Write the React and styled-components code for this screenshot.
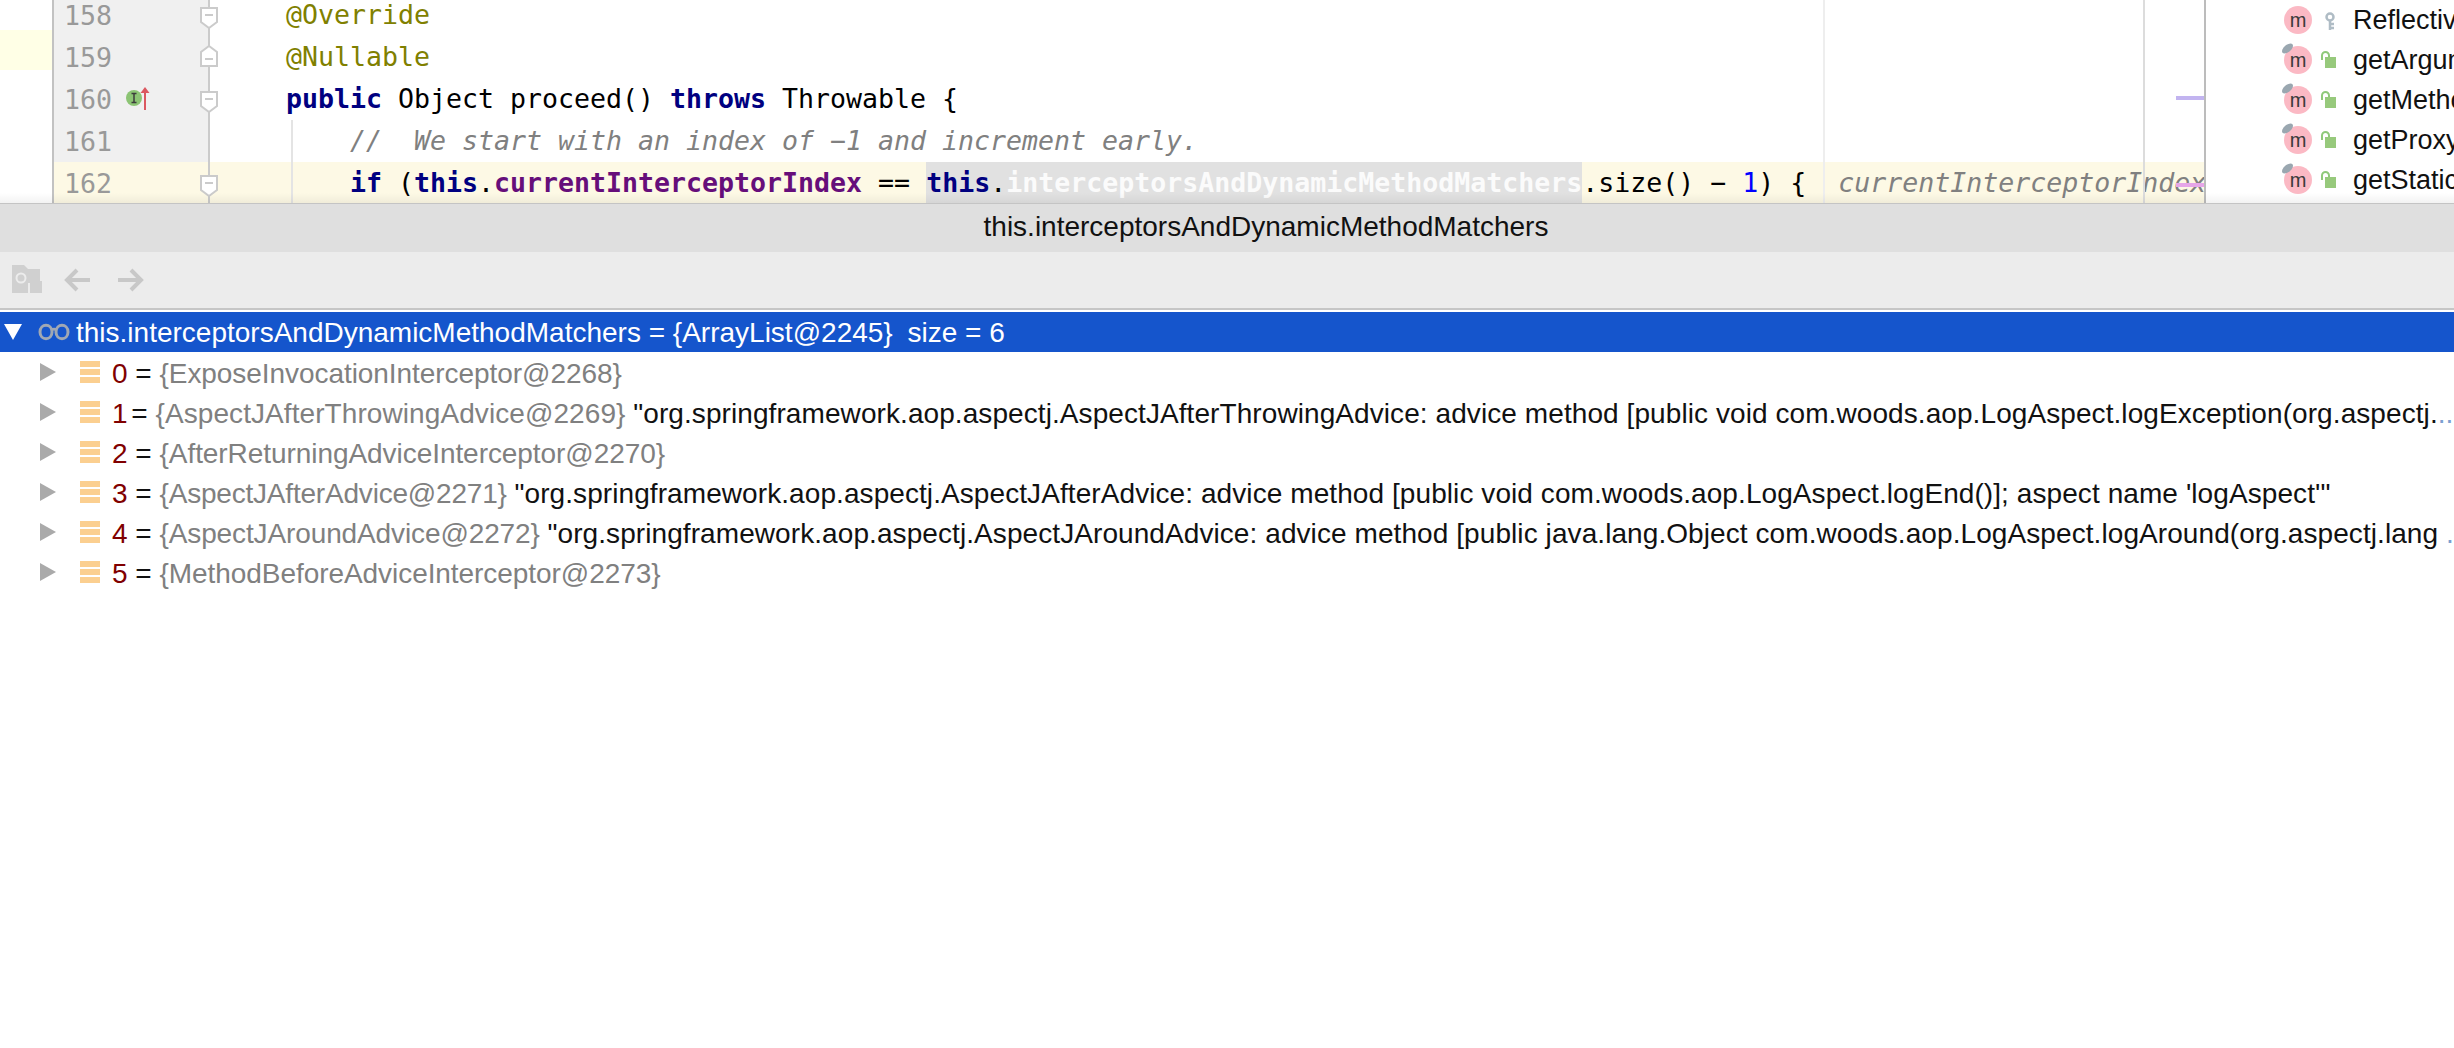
import React from 'react';
import styled, { createGlobalStyle } from 'styled-components';

const GlobalStyle = createGlobalStyle`
  html, body {
    margin: 0;
    padding: 0;
    background: #fff;
    overflow: hidden;
  }
  #root {
    width: 2454px;
    height: 1048px;
    overflow: hidden;
  }
`;

const Page = styled.div`
  width: 2454px;
  height: 1048px;
  display: flex;
  flex-direction: column;
  background: #fff;
  font-family: "Liberation Sans", Arial, sans-serif;
  overflow: hidden;
`;

const Top = styled.div`
  position: relative;
  display: flex;
  height: 203px;
  overflow: hidden;
  border-bottom: 1px solid #c4c4c4;
  flex: none;
`;

const Margin = styled.div`
  width: 52px;
  flex: none;
  padding-top: 30px;
`;

const MarginMark = styled.div`
  height: 40px;
  background: #ffffe6;
`;

const Editor = styled.div`
  position: relative;
  width: 2150px;
  flex: none;
  border-left: 2px solid #c2c2c2;
  border-right: 2px solid #bcbcbc;
  overflow: hidden;
`;

const Lines = styled.div`
  margin-top: -6px;
`;

const Line = styled.div`
  display: flex;
  height: 42px;
  background: ${p => (p.$current ? '#fdf9e5' : 'transparent')};
`;

const Gutter = styled.div`
  position: relative;
  width: 156px;
  flex: none;
  display: flex;
  align-items: center;
  gap: 14px;
  padding-left: 10px;
  box-sizing: border-box;
  border-right: 2px solid #cbcbcb;
  background: ${p => (p.$current ? 'transparent' : '#f0f0f0')};
`;

const LineNo = styled.span`
  font-family: "DejaVu Sans Mono", monospace;
  font-size: 26.58px;
  color: #999;
`;

const Fold = styled.svg`
  position: absolute;
  right: -10px;
  top: ${p => (p.$up ? '9px' : '13px')};
  width: 18px;
  height: 22px;
`;

const Code = styled.div`
  flex: 1;
  padding-left: ${p => 76 + p.$indent * 64}px;
  font-family: "DejaVu Sans Mono", monospace;
  font-size: 26.58px;
  line-height: 42px;
  white-space: pre;
  color: #000;
`;

const Kw = styled.span`
  color: #000080;
  font-weight: 700;
`;

const Ann = styled.span`
  color: #808000;
`;

const Comment = styled.span`
  color: #808080;
  font-style: italic;
`;

const Field = styled.span`
  color: #660e7a;
  font-weight: 700;
`;

const Num = styled.span`
  color: #0000ff;
`;

const Found = styled.span`
  display: inline-block;
  height: 42px;
  background: #e1e1e1;
`;

const Selected = styled.span`
  color: #fbfbfb;
  font-weight: 700;
`;

const Hint = styled.span`
  margin-left: 32px;
  color: #808080;
  font-style: italic;
`;

const Guide = styled.div`
  position: absolute;
  left: ${p => p.$x}px;
  top: ${p => p.$top}px;
  bottom: 0;
  width: 2px;
  background: ${p => p.$color};
`;

const ScrollMark = styled.div`
  position: absolute;
  right: 0;
  top: ${p => p.$top}px;
  width: 28px;
  height: 4px;
  background: ${p => p.$color};
`;

const Shade = styled.div`
  position: absolute;
  left: 0;
  right: 0;
  bottom: 0;
  height: 10px;
  background: linear-gradient(to bottom, rgba(0, 0, 0, 0), rgba(0, 0, 0, 0.05));
  pointer-events: none;
`;

const Structure = styled.div`
  flex: 1;
  padding-left: 78px;
  overflow: hidden;
`;

const Member = styled.div`
  display: flex;
  align-items: center;
  height: 40px;
  white-space: nowrap;
  font-size: 27px;
  color: #111;
`;

const MemberIcon = styled.div`
  position: relative;
  width: 28px;
  height: 28px;
  flex: none;
  border-radius: 50%;
  background: #fbb9c4;
  display: flex;
  align-items: center;
  justify-content: center;
  font-size: 20px;
  line-height: 24px;
  color: #3a3a3a;
`;

const Override = styled.div`
  position: absolute;
  left: 0;
  top: -4px;
  width: 7px;
  height: 13px;
  border-radius: 50%;
  background: #9aa7b0;
  transform: rotate(50deg);
`;

const Access = styled.svg`
  width: 18px;
  height: 24px;
  flex: none;
  margin: 0 15px 0 8px;
`;

const TitleBar = styled.div`
  height: 48px;
  flex: none;
  background: #dfdfdf;
  display: flex;
  justify-content: center;
  padding-left: 78px;
  font-size: 28px;
  line-height: 46px;
  color: #111;
`;

const Toolbar = styled.div`
  height: 56px;
  flex: none;
  background: #ececec;
  border-bottom: 2px solid #c6c6c6;
  display: flex;
  align-items: center;
  padding-left: 12px;
`;

const ToolIcon = styled.svg`
  width: ${p => p.$w}px;
  height: 30px;
  margin-right: ${p => p.$gap}px;
  flex: none;
`;

const Tree = styled.div`
  padding-top: 2px;
`;

const Row = styled.div`
  display: flex;
  align-items: center;
  height: 40px;
  white-space: nowrap;
  font-size: 28px;
  color: ${p => (p.$selected ? '#fff' : '#111')};
  background: ${p => (p.$selected ? '#1555cc' : 'transparent')};
  padding-left: ${p => (p.$selected ? '4px' : '40px')};
  overflow: hidden;
`;

const RowText = styled.div`
  padding-top: ${p => (p.$selected ? '1px' : '3px')};
`;

const Arrow = styled.div`
  width: 0;
  height: 0;
  flex: none;
  border-left: 16px solid #aaa;
  border-top: 9px solid transparent;
  border-bottom: 9px solid transparent;
`;

const OpenArrow = styled.div`
  width: 0;
  height: 0;
  flex: none;
  border-top: 16px solid #fff;
  border-left: 9px solid transparent;
  border-right: 9px solid transparent;
`;

const Glasses = styled.svg`
  width: 32px;
  height: 18px;
  flex: none;
  margin: 0 6px 0 16px;
`;

const Stack = styled.div`
  width: 20px;
  height: 22px;
  flex: none;
  margin: 0 12px 0 24px;
  background: repeating-linear-gradient(to bottom, #fbcf90 0 6px, transparent 6px 8px);
`;

const Index = styled.span`
  color: #800000;
  margin-right: ${p => (p.$narrow ? '-4px' : '0')};
`;

const Grey = styled.span`
  color: #808080;
  letter-spacing: ${p => p.$spacing}px;
`;

const Value = styled.span`
  letter-spacing: 0.08px;
`;

const More = styled.span`
  color: #7c9fd0;
`;

const Size = styled.span`
  margin-left: 7px;
`;

const FoldIcon = ({ up }) => (
  <Fold $up={up} viewBox="0 0 18 22">
    <path
      d={up ? 'M1 21V7L9 1l8 6v14z' : 'M1 1v14l8 6 8-6V1z'}
      fill="#fff"
      stroke="#cbcbcb"
      strokeWidth="2"
    />
    <path d={up ? 'M5 14h8' : 'M5 8h8'} stroke="#cbcbcb" strokeWidth="2" />
  </Fold>
);

const LockIcon = () => (
  <Access viewBox="0 0 18 24">
    <path d="M2 12V7.500a3.500 3.500 0 0 1 7 0V9" fill="none" stroke="#8fc97a" strokeWidth="2" />
    <rect x="5" y="9" width="11" height="11" fill="#97c97c" />
  </Access>
);

const KeyIcon = () => (
  <Access viewBox="0 0 18 24">
    <circle cx="10" cy="9" r="3.500" fill="none" stroke="#afbcc5" strokeWidth="2.500" />
    <path d="M10 12v10M10 16h4M10 20h4" stroke="#afbcc5" strokeWidth="2.500" />
  </Access>
);

const members = [
  { name: 'ReflectiveMethodInvocation', key: true },
  { name: 'getArguments' },
  { name: 'getMethod' },
  { name: 'getProxy' },
  { name: 'getStaticPart' },
];

const items = [
  { name: '{ExposeInvocationInterceptor@2268}', spacing: -0.06 },
  {
    name: '{AspectJAfterThrowingAdvice@2269}',
    spacing: 0.08,
    value: '"org.springframework.aop.aspectj.AspectJAfterThrowingAdvice: advice method [public void com.woods.aop.LogAspect.logException(org.aspectj.',
    more: '...',
  },
  { name: '{AfterReturningAdviceInterceptor@2270}', spacing: -0.06 },
  {
    name: '{AspectJAfterAdvice@2271}',
    spacing: -0.2,
    value: '"org.springframework.aop.aspectj.AspectJAfterAdvice: advice method [public void com.woods.aop.LogAspect.logEnd()]; aspect name \'logAspect\'"',
  },
  {
    name: '{AspectJAroundAdvice@2272}',
    spacing: -0.12,
    value: '"org.springframework.aop.aspectj.AspectJAroundAdvice: advice method [public java.lang.Object com.woods.aop.LogAspect.logAround(org.aspectj.lang ',
    more: '...',
  },
  { name: '{MethodBeforeAdviceInterceptor@2273}', spacing: -0.06 },
];

export default function App() {
  return (
    <Page>
      <GlobalStyle />
      <Top>
        <Margin>
          <MarginMark />
        </Margin>
        <Editor>
          <Lines>
            <Line>
              <Gutter>
                <LineNo>158</LineNo>
                <FoldIcon />
              </Gutter>
              <Code $indent={0}><Ann>@Override</Ann></Code>
            </Line>
            <Line>
              <Gutter>
                <LineNo>159</LineNo>
                <FoldIcon up />
              </Gutter>
              <Code $indent={0}><Ann>@Nullable</Ann></Code>
            </Line>
            <Line>
              <Gutter>
                <LineNo>160</LineNo>
                <svg width="28" height="26" viewBox="0 0 28 26">
                  <circle cx="8" cy="12" r="8" fill="#8cc474" />
                  <path d="M5.500 7.500h5M8 7.500v9M5.500 16.500h5" stroke="#3c3c3c" strokeWidth="1.500" fill="none" />
                  <path d="M19 24V6" stroke="#db5860" strokeWidth="2" />
                  <path d="M14.500 7L19 1l4.500 6z" fill="#db5860" />
                </svg>
                <FoldIcon />
              </Gutter>
              <Code $indent={0}><Kw>public</Kw> Object proceed() <Kw>throws</Kw> Throwable {'{'}</Code>
            </Line>
            <Line>
              <Gutter>
                <LineNo>161</LineNo>
              </Gutter>
              <Code $indent={1}><Comment>//  We start with an index of −1 and increment early.</Comment></Code>
            </Line>
            <Line $current>
              <Gutter $current>
                <LineNo>162</LineNo>
                <FoldIcon />
              </Gutter>
              <Code $indent={1}>
                <Kw>if</Kw> (<Kw>this</Kw>.<Field>currentInterceptorIndex</Field> == <Found><Kw>this</Kw>.<Selected>interceptorsAndDynamicMethodMatchers</Selected></Found>.size() − <Num>1</Num>) {'{'}
                <Hint>currentInterceptorIndex</Hint>
              </Code>
            </Line>
          </Lines>
          <Guide $x={237} $top={120} $color="#e4e4e4" />
          <Guide $x={1769} $top={0} $color="#eeeeee" />
          <Guide $x={2089} $top={0} $color="#dcdcdc" />
          <ScrollMark $top={96} $color="#c2b4f0" />
          <ScrollMark $top={183} $color="#e6a6e8" />
        </Editor>
        <Structure>
          {members.map(m => (
            <Member key={m.name}>
              <MemberIcon>
                m
                {!m.key && <Override />}
              </MemberIcon>
              {m.key ? <KeyIcon /> : <LockIcon />}
              {m.name}
            </Member>
          ))}
        </Structure>
        <Shade />
      </Top>
      <TitleBar>this.interceptorsAndDynamicMethodMatchers</TitleBar>
      <Toolbar>
        <ToolIcon $w={30} $gap={22} viewBox="0 0 30 30">
          <path d="M0 0h12l4 4h12v14H16v10H0z" fill="#d0d0d0" />
          <circle cx="9" cy="13" r="4.500" fill="none" stroke="#ececec" strokeWidth="2" />
          <rect x="18" y="16" width="12" height="12" fill="#d0d0d0" />
        </ToolIcon>
        <ToolIcon $w={26} $gap={28} viewBox="0 0 26 30">
          <path d="M26 15H3M13 5L3 15l10 10" fill="none" stroke="#c8c8c8" strokeWidth="4" />
        </ToolIcon>
        <ToolIcon $w={26} $gap={0} viewBox="0 0 26 30">
          <path d="M0 15h23M13 5l10 10-10 10" fill="none" stroke="#c8c8c8" strokeWidth="4" />
        </ToolIcon>
      </Toolbar>
      <Tree>
        <Row $selected>
          <OpenArrow />
          <Glasses viewBox="0 0 32 18">
            <path d="M2 9c0-9 12-9 12 0 0 9-12 9-12 0zM18 9c0-9 12-9 12 0 0 9-12 9-12 0zM14 7c1-1 3-1 4 0" fill="none" stroke="#a0a8b4" strokeWidth="3" />
          </Glasses>
          <RowText $selected>
            this.interceptorsAndDynamicMethodMatchers = {'{ArrayList@2245}'} <Size>size = 6</Size>
          </RowText>
        </Row>
        {items.map((item, i) => (
          <Row key={item.name}>
            <Arrow />
            <Stack />
            <RowText>
              <Index $narrow={i === 1}>{i}</Index>
              &nbsp;=&nbsp;
              <Grey $spacing={item.spacing}>{item.name}</Grey>
              {item.value && <>&nbsp;<Value>{item.value}</Value></>}
              {item.more && <More>{item.more}</More>}
            </RowText>
          </Row>
        ))}
      </Tree>
    </Page>
  );
}
